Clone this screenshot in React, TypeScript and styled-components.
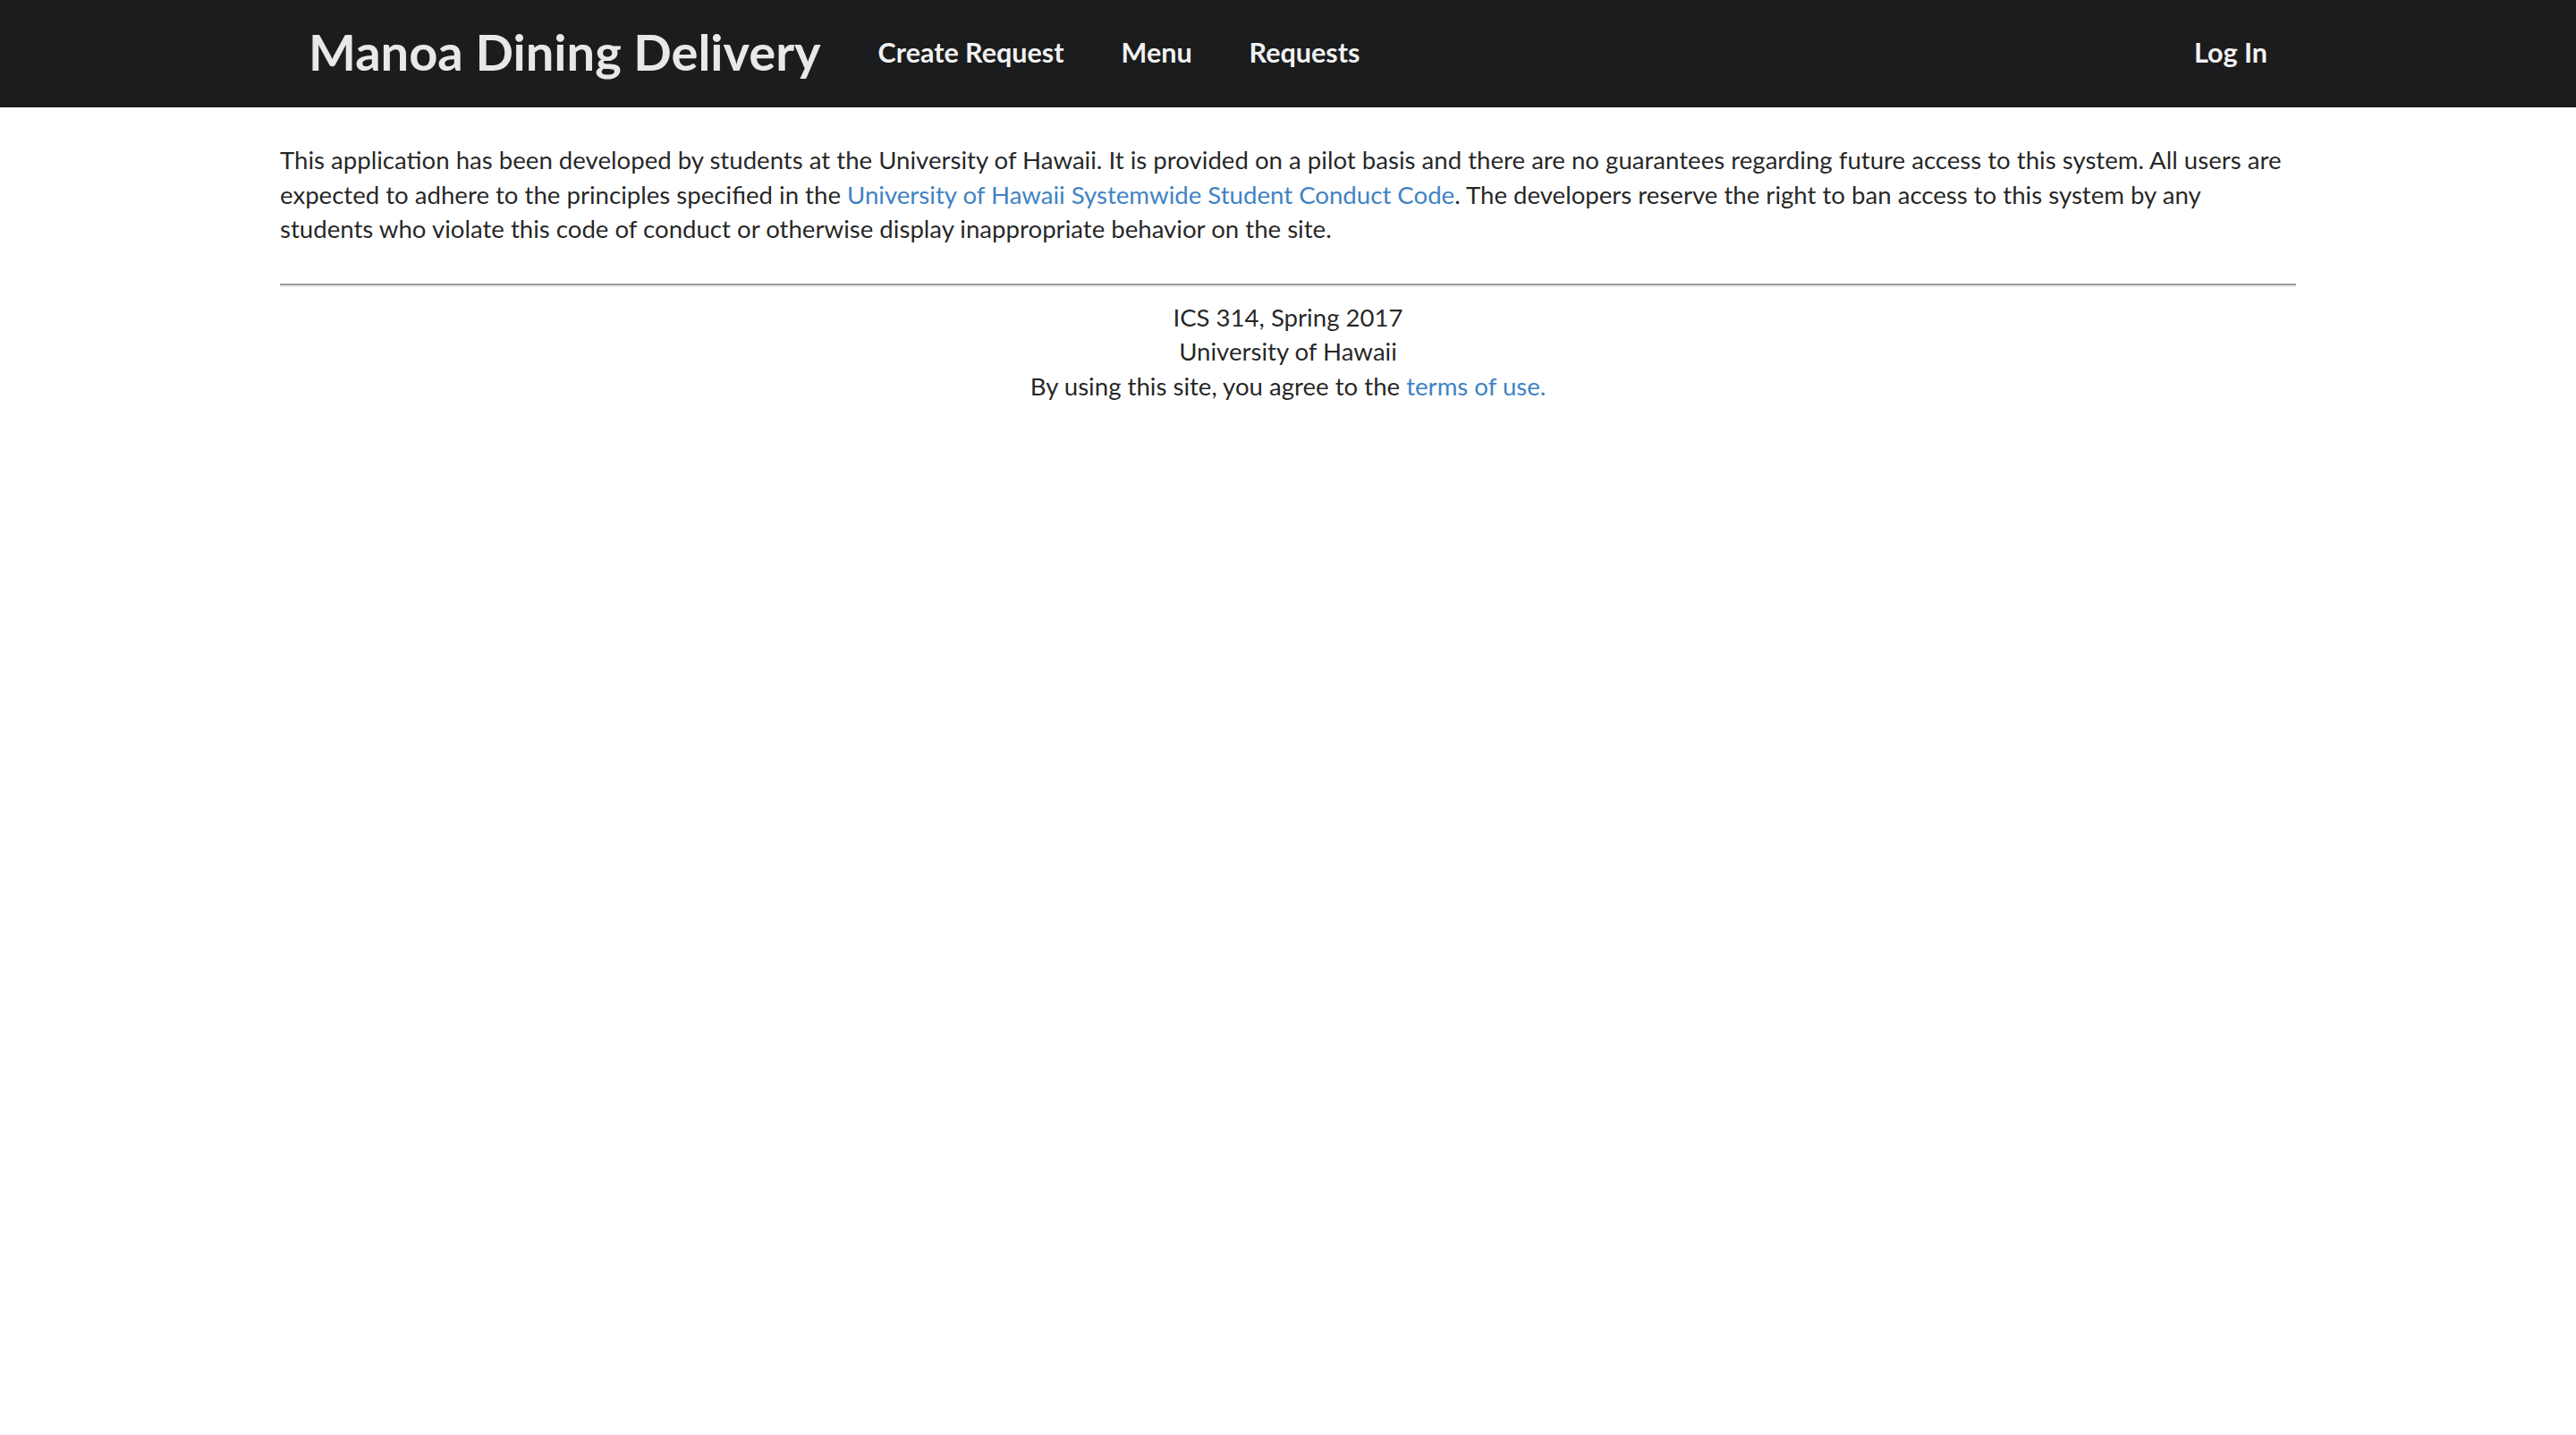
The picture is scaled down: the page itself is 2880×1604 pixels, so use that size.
import React from "react";
import styled, { createGlobalStyle } from "styled-components";

const GlobalStyle = createGlobalStyle`
  html, body {
    margin: 0;
    padding: 0;
    background: #ffffff;
  }
  body {
    font-family: Lato, "Helvetica Neue", Arial, sans-serif;
    font-size: 27.6px;
    line-height: 38.5px;
    color: rgba(0, 0, 0, 0.87);
  }
`;

const NavBar = styled.nav`
  background: #1b1c1d;
  height: 120px;
  display: flex;
  justify-content: center;
`;

const NavInner = styled.div`
  width: 2254px;
  display: flex;
  align-items: center;
  padding-bottom: 3px;
`;

const NavItem = styled.a<{ $brand?: boolean }>`
  display: flex;
  align-items: center;
  padding: 0 32px;
  font-family: Lato, "Helvetica Neue", Arial, sans-serif;
  font-weight: 700;
  font-size: ${(p) => (p.$brand ? "56px" : "30.5px")};
  color: ${(p) => (p.$brand ? "#e8e8e8" : "#f2f2f2")};
  text-decoration: none;
  white-space: nowrap;
  cursor: pointer;
`;

const Spacer = styled.div`
  flex: 1;
`;

const Main = styled.main`
  display: flex;
  justify-content: center;
`;

const Container = styled.div`
  width: 2254px;
  padding-top: 40px;
`;

const Paragraph = styled.p`
  margin: 0;
`;

const Link = styled.a`
  color: #4183c4;
  text-decoration: none;
`;

const Rule = styled.hr`
  margin: 41px 0 15px;
  border: none;
  border-top: 2px solid #9a9a9a;
  border-bottom: 2px solid #eeeeee;
  height: 0;
`;

const Footer = styled.footer`
  text-align: center;
`;

const FooterLine = styled.div``;

export default function App() {
  return (
    <>
      <GlobalStyle />
      <NavBar>
        <NavInner>
          <NavItem $brand>Manoa Dining Delivery</NavItem>
          <NavItem>Create Request</NavItem>
          <NavItem>Menu</NavItem>
          <NavItem>Requests</NavItem>
          <Spacer />
          <NavItem>Log In</NavItem>
        </NavInner>
      </NavBar>
      <Main>
        <Container>
          <Paragraph>
            This application has been developed by students at the University of Hawaii. It is provided on a pilot
            basis and there are no guarantees regarding future access to this system. All users are expected to adhere
            to the principles specified in the <Link>University of Hawaii Systemwide Student Conduct Code</Link>. The
            developers reserve the right to ban access to this system by any students who violate this code of conduct
            or otherwise display inappropriate behavior on the site.
          </Paragraph>
          <Rule />
          <Footer>
            <FooterLine>ICS 314, Spring 2017</FooterLine>
            <FooterLine>University of Hawaii</FooterLine>
            <FooterLine>
              By using this site, you agree to the <Link>terms of use.</Link>
            </FooterLine>
          </Footer>
        </Container>
      </Main>
    </>
  );
}
